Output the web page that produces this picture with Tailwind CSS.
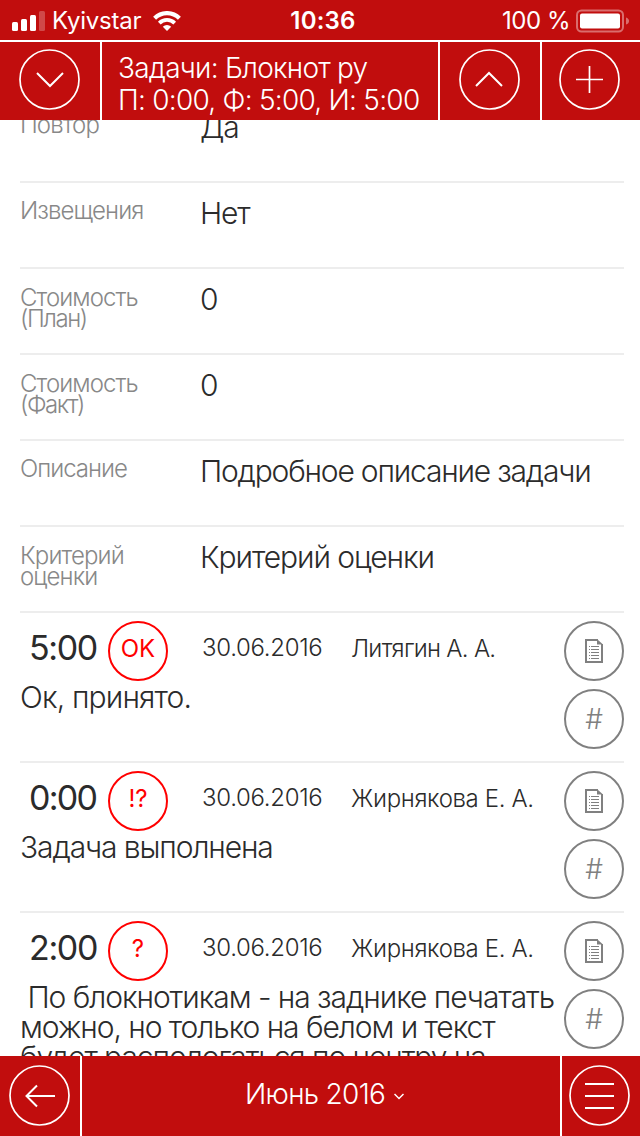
<!DOCTYPE html>
<html lang="ru">
<head>
    <meta charset="UTF-8">
    <meta name="viewport" content="width=device-width, initial-scale=1.0">
    <title>Задачи</title>
    <script src="https://cdn.jsdelivr.net/npm/@tailwindcss/browser@4"></script>
</head>
<body class="font-['Inter','Liberation_Sans',sans-serif] bg-white text-[#2b2b2b]">
    <div class="flex flex-col w-[640px] h-[1136px] overflow-hidden">
        <!-- status bar -->
        <div class="h-10 shrink-0 bg-[#c10d0d] text-white text-2xl leading-10 grid grid-cols-3 whitespace-nowrap">
            <div class="flex items-center pl-3">
                <svg class="w-[34px] h-5" viewBox="0 0 34 20" fill="white">
                    <rect x="0" y="11" width="6" height="9" rx="1.5"/>
                    <rect x="9" y="8" width="6" height="12" rx="1.5"/>
                    <rect x="18" y="4" width="6" height="16" rx="1.5"/>
                    <rect x="27" y="0" width="6" height="20" rx="1.5" opacity=".25"/>
                </svg>
                <span class="ml-[6px] pt-px w-[101px] tracking-[-0.01em]">Kyivstar</span>
                <svg class="w-7 h-5" viewBox="0 0 28 20" fill="none" stroke="white" stroke-width="4.2">
                    <path d="M1.6 7.2a17.6 17.6 0 0 1 24.8 0"/>
                    <path d="M6.3 12.1a10.9 10.9 0 0 1 15.4 0" stroke-width="3.8"/>
                    <path d="M14 20l-4.2-4.2a6 6 0 0 1 8.4 0z" fill="white" stroke="none"/>
                </svg>
            </div>
            <div class="text-center font-semibold pl-[6px] pt-px tracking-[0.01em]">10:36</div>
            <div class="flex items-center justify-end pr-[10px]">
                <span class="mr-[6px] pt-px tracking-[-0.02em]">100 %</span>
                <svg class="w-[54px] h-6" viewBox="0 0 54 24" fill="white">
                    <rect x="1" y="1.5" width="46" height="21" rx="4.5" fill="none" stroke="white" stroke-width="2" opacity=".4"/>
                    <rect x="4" y="4.5" width="40" height="15" rx="2"/>
                    <path d="M50 8.5q3 1 3 3.500t-3 3.500z" opacity=".4"/>
                </svg>
            </div>
        </div>

        <!-- header -->
        <header class="h-20 shrink-0 flex bg-[#c10d0d] text-white border-t-2 border-white">
            <button class="flex items-start w-[102px] border-r-2 border-white pl-[19px] pt-[7px]">
                <svg class="w-[61px] h-[61px]" viewBox="0 0 61 61" fill="none" stroke="white" stroke-width="2">
                    <circle cx="30.500" cy="30.500" r="29.500" stroke-width="1.700"/>
                    <path d="M18 24l13 13 13-13"/>
                </svg>
            </button>
            <div class="w-[338px] border-r-2 border-white pl-4 pt-[10px] text-[28px] leading-8 font-light whitespace-nowrap">
                <div class="tracking-[-0.027em]">Задачи: Блокнот ру</div>
                <div class="tracking-[-0.027em]">П: 0:00, Ф: 5:00, И: 5:00</div>
            </div>
            <button class="flex items-start w-[102px] border-r-2 border-white pl-[19px] pt-[7px]">
                <svg class="w-[61px] h-[61px]" viewBox="0 0 61 61" fill="none" stroke="white" stroke-width="2">
                    <circle cx="30.500" cy="30.500" r="29.500" stroke-width="1.700"/>
                    <path d="M17 37l13-13 13 13"/>
                </svg>
            </button>
            <button class="flex items-start w-[98px] pl-[17px] pt-[7px]">
                <svg class="w-[61px] h-[61px]" viewBox="0 0 61 61" fill="none" stroke="white" stroke-width="1.700">
                    <circle cx="30.500" cy="30.500" r="29.500"/>
                    <path d="M17 30.500h27M30.500 17v27"/>
                </svg>
            </button>
        </header>

        <!-- content -->
        <main class="h-[936px] shrink-0 overflow-hidden pl-5 pr-4 font-light whitespace-nowrap">
            <dl class="-mt-[23px] text-[30px] leading-[30px] tracking-[-0.04em]">
                <div class="flex h-[86px] border-b-2 border-[#ededed]">
                    <dt class="w-[180px] pt-[17px] text-2xl leading-[21px] tracking-[-0.038em] text-[#888]">Повтор</dt>
                    <dd class="pt-[15px]">Да</dd>
                </div>
                <div class="flex h-[86px] border-b-2 border-[#ededed]">
                    <dt class="w-[180px] pt-[17px] text-2xl leading-[21px] tracking-[-0.038em] text-[#888]">Извещения</dt>
                    <dd class="pt-[15px]">Нет</dd>
                </div>
                <div class="flex h-[86px] border-b-2 border-[#ededed]">
                    <dt class="w-[180px] pt-[18px] text-2xl leading-[21px] tracking-[-0.038em] text-[#888]">Стоимость<br><span class="tracking-[-0.06em]">(План)</span></dt>
                    <dd class="pt-[15px]">0</dd>
                </div>
                <div class="flex h-[86px] border-b-2 border-[#ededed]">
                    <dt class="w-[180px] pt-[18px] text-2xl leading-[21px] tracking-[-0.038em] text-[#888]">Стоимость<br><span class="tracking-[-0.06em]">(Факт)</span></dt>
                    <dd class="pt-[15px]">0</dd>
                </div>
                <div class="flex h-[86px] border-b-2 border-[#ededed]">
                    <dt class="w-[180px] pt-[17px] text-2xl leading-[21px] tracking-[-0.042em] text-[#888]">Описание</dt>
                    <dd class="pt-[15px]">Подробное описание задачи</dd>
                </div>
                <div class="flex h-[86px] border-b-2 border-[#ededed]">
                    <dt class="w-[180px] pt-[18px] text-2xl leading-[21px] tracking-[-0.036em] text-[#888]">Критерий<br>оценки</dt>
                    <dd class="pt-[15px] tracking-[-0.036em]">Критерий оценки</dd>
                </div>
            </dl>

            <article class="flex h-[150px] border-b-2 border-[#ededed]">
                <div class="w-[544px]">
                    <div class="flex h-[68px] pt-2 text-2xl leading-[54px]">
                        <span class="w-[88px] pl-[9px] text-[34px] font-normal tracking-[-0.04em]">5:00</span>
                        <span class="size-[60px] rounded-full border-2 border-[#f00] text-[#f00] text-center font-normal leading-[52px]">OK</span>
                        <span class="w-[150px] ml-[34px] tracking-[-0.013em]">30.06.2016</span>
                        <span class="pt-px ml-[-1px] tracking-[-0.03em]">Литягин А. А.</span>
                    </div>
                    <p class="pt-px text-[30px] leading-[30px] tracking-[-0.028em]">Ок, принято.</p>
                </div>
                <div class="w-[60px] pt-2 flex flex-col gap-2 text-[#808080]">
                    <button class="size-[60px] rounded-full border-2 flex items-center justify-center">
                        <svg class="w-[18px] h-6" viewBox="0 0 18 24" fill="none" stroke="currentColor">
                            <path d="M13 1H1v22h16V5" stroke-width="2"/>
                            <path d="M12 0l6 5.500h-6z" fill="currentColor" stroke="none"/>
                            <path d="M4 7.500h1M4 10.500h1M4 13.500h1M4 16.500h1M4 19.500h1M6 7.500h8M6 10.500h8M6 13.500h8M6 16.500h8M6 19.500h8"/>
                        </svg>
                    </button>
                    <button class="size-[60px] rounded-full border-2 text-[28px] leading-[56px]">#</button>
                </div>
            </article>

            <article class="flex h-[150px] border-b-2 border-[#ededed]">
                <div class="w-[544px]">
                    <div class="flex h-[68px] pt-2 text-2xl leading-[54px]">
                        <span class="w-[88px] pl-[9px] text-[34px] font-normal tracking-[-0.05em]">0:00</span>
                        <span class="size-[60px] rounded-full border-2 border-[#f00] text-[#f00] text-center font-normal leading-[52px]">!?</span>
                        <span class="w-[150px] ml-[34px] tracking-[-0.013em]">30.06.2016</span>
                        <span class="pt-px ml-[-1px] tracking-[-0.015em]">Жирнякова Е. А.</span>
                    </div>
                    <p class="pt-px text-[30px] leading-[30px] tracking-[-0.037em]">Задача выполнена</p>
                </div>
                <div class="w-[60px] pt-2 flex flex-col gap-2 text-[#808080]">
                    <button class="size-[60px] rounded-full border-2 flex items-center justify-center">
                        <svg class="w-[18px] h-6" viewBox="0 0 18 24" fill="none" stroke="currentColor">
                            <path d="M13 1H1v22h16V5" stroke-width="2"/>
                            <path d="M12 0l6 5.500h-6z" fill="currentColor" stroke="none"/>
                            <path d="M4 7.500h1M4 10.500h1M4 13.500h1M4 16.500h1M4 19.500h1M6 7.500h8M6 10.500h8M6 13.500h8M6 16.500h8M6 19.500h8"/>
                        </svg>
                    </button>
                    <button class="size-[60px] rounded-full border-2 text-[28px] leading-[56px]">#</button>
                </div>
            </article>

            <article class="flex">
                <div class="w-[544px]">
                    <div class="flex h-[68px] pt-2 text-2xl leading-[54px]">
                        <span class="w-[88px] pl-[9px] text-[34px] font-normal tracking-[-0.04em]">2:00</span>
                        <span class="size-[60px] rounded-full border-2 border-[#f00] text-[#f00] text-center font-normal leading-[52px]">?</span>
                        <span class="w-[150px] ml-[34px] tracking-[-0.013em]">30.06.2016</span>
                        <span class="pt-px ml-[-1px] tracking-[-0.015em]">Жирнякова Е. А.</span>
                    </div>
                    <p class="pt-px text-[30px] leading-[30px] tracking-[-0.035em]">&nbsp;По блокнотикам - на заднике печатать<br>можно, но только на белом и текст<br>будет распологаться по центру на</p>
                </div>
                <div class="w-[60px] pt-2 flex flex-col gap-2 text-[#808080]">
                    <button class="size-[60px] rounded-full border-2 flex items-center justify-center">
                        <svg class="w-[18px] h-6" viewBox="0 0 18 24" fill="none" stroke="currentColor">
                            <path d="M13 1H1v22h16V5" stroke-width="2"/>
                            <path d="M12 0l6 5.500h-6z" fill="currentColor" stroke="none"/>
                            <path d="M4 7.500h1M4 10.500h1M4 13.500h1M4 16.500h1M4 19.500h1M6 7.500h8M6 10.500h8M6 13.500h8M6 16.500h8M6 19.500h8"/>
                        </svg>
                    </button>
                    <button class="size-[60px] rounded-full border-2 text-[28px] leading-[56px]">#</button>
                </div>
            </article>
        </main>

        <!-- bottom bar -->
        <footer class="h-20 shrink-0 flex bg-[#c10d0d] text-white">
            <button class="flex items-start w-[82px] border-r-2 border-white pl-[9px] pt-[9px]">
                <svg class="w-[61px] h-[61px]" viewBox="0 0 61 61" fill="none" stroke="white" stroke-width="2">
                    <circle cx="30.500" cy="30.500" r="29.500" stroke-width="1.700"/>
                    <path d="M46 31H18M28 20.500L17.500 31 28 41.500"/>
                </svg>
            </button>
            <div class="w-[480px] border-r-2 border-white pl-[163px] flex items-center text-[28px] leading-8 font-light whitespace-nowrap">
                <span class="w-[149px] pb-1 tracking-[-0.025em]">Июнь 2016</span>
                <svg class="w-[10px] h-[7px]" viewBox="0 0 10 7" fill="none" stroke="white" stroke-width="1.500">
                    <path d="M.5 1L5 5.500 9.500 1"/>
                </svg>
            </div>
            <button class="flex items-start w-[78px] pl-[7px] pt-[9px]">
                <svg class="w-[61px] h-[61px]" viewBox="0 0 61 61" fill="none" stroke="white" stroke-width="2">
                    <circle cx="30.500" cy="30.500" r="29.500" stroke-width="1.700"/>
                    <path d="M16 19h29M16 31h29M16 43h29"/>
                </svg>
            </button>
        </footer>
    </div>
</body>
</html>
